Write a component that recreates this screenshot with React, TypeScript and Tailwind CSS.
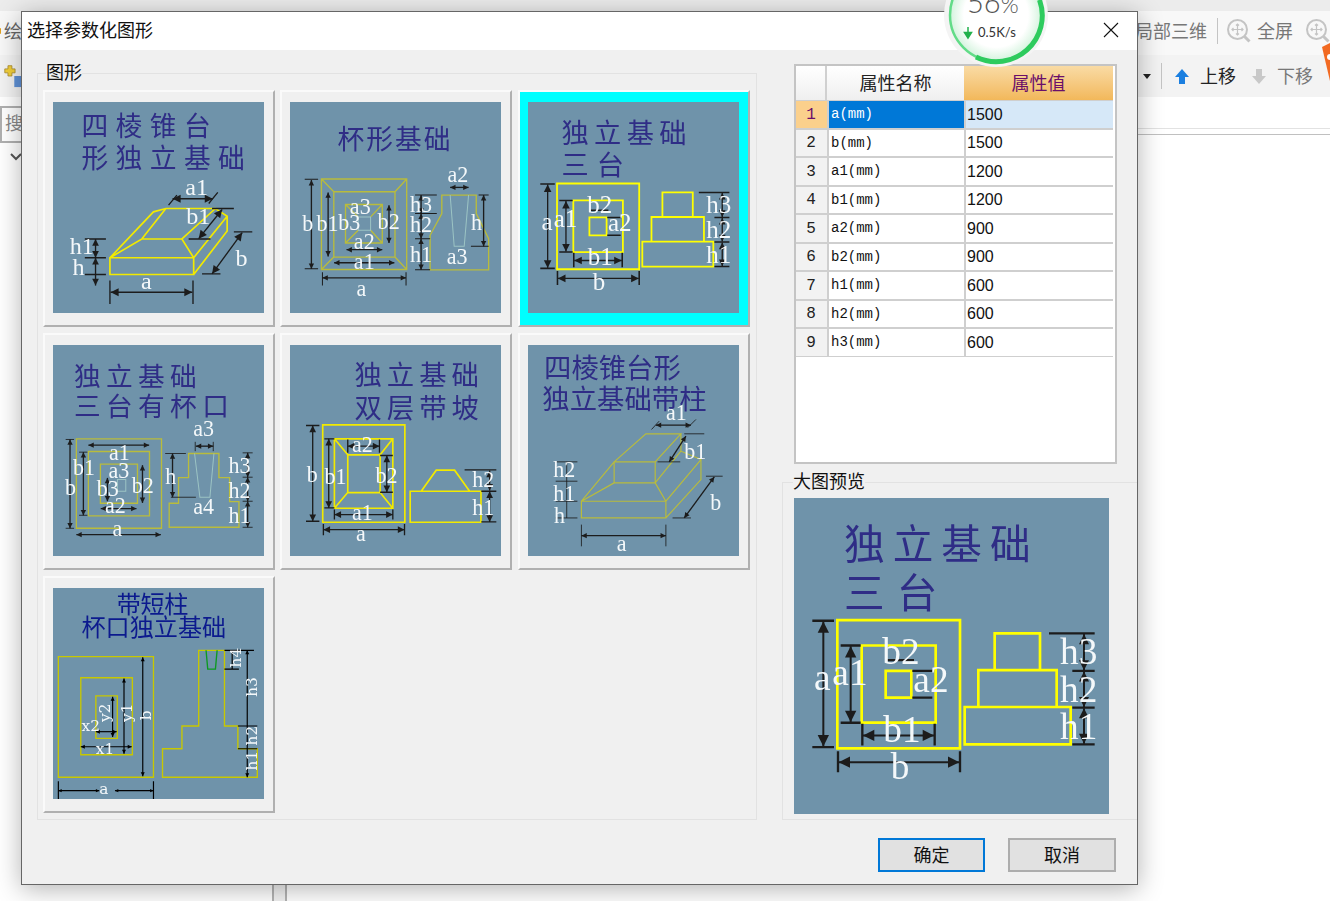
import type { ReactNode } from 'react';

const CJK = '"Noto Sans CJK SC", "Noto Sans", sans-serif';
const SERIF = '"Liberation Serif", serif';
const SLAB = '"DejaVu Serif", serif';
const BLACK = '#1c1c1c';
const YELLOW = '#f2ea00';
const OLIVE = '#b9bc3c';
const PALE = '#9cc4c4';

type DimProps = { x1: number; y1: number; x2: number; y2: number; s?: number; w?: number; c?: string };

// ligne de cote avec une flèche à chaque bout
const Dim = ({ x1, y1, x2, y2, s = 16, w = 4, c = BLACK }: DimProps) => {
  const a = Math.atan2(y2 - y1, x2 - x1);
  const head = (x: number, y: number, d: number) => {
    const bx = x + Math.cos(a) * s * d;
    const by = y + Math.sin(a) * s * d;
    const nx = -Math.sin(a) * s * 0.5;
    const ny = Math.cos(a) * s * 0.5;
    return `${x},${y} ${bx + nx},${by + ny} ${bx - nx},${by - ny}`;
  };
  return (
    <g>
      <line x1={x1} y1={y1} x2={x2} y2={y2} stroke={c} strokeWidth={w} />
      <polygon points={head(x1, y1, 1)} fill={c} />
      <polygon points={head(x2, y2, -1)} fill={c} />
    </g>
  );
};

const Lines = ({ d, c = YELLOW, w = 5 }: { d: string; c?: string; w?: number }) => (
  <path d={d} fill="none" stroke={c} strokeWidth={w} />
);

const Label = ({ x, y, t, size = 66, rot, font = SERIF }: { x: number; y: number; t: string; size?: number; rot?: boolean; font?: string }) => (
  <text
    x={x}
    y={y}
    fontSize={size}
    fontFamily={font}
    fill="#f4f8fa"
    transform={rot ? `rotate(-90 ${x} ${y})` : undefined}
  >
    {t}
  </text>
);

const Title = ({ x, y, t, size = 80, gap = 18, c = '#2f2d86' }: { x: number; y: number; t: string; size?: number; gap?: number; c?: string }) => (
  <text x={x} y={y} fontSize={size} letterSpacing={gap} fontFamily={CJK} fill={c}>
    {t}
  </text>
);

const Picture = ({ view, children, className }: { view: string; children: ReactNode; className: string }) => (
  <svg viewBox={view} preserveAspectRatio="none" className={`block bg-[#6f93aa] ${className}`}>
    {children}
  </svg>
);

type DiagramProps = { className: string };

const Pyramid = ({ className }: DiagramProps) => (
  <Picture view="160 307 630 630" className={className}>
    <Title x={245} y={410} t="四棱锥台" gap={22} />
    <Title x={245} y={503} t="形独立基础" gap={22} />
    <Lines d="M330 772H580V822H330ZM330 772L460 635L497 625H645L680 648V692L580 822M680 648L580 772M330 772L425 716H545L580 772M425 716L497 625M545 716L645 625" />
    <Lines c={BLACK} w={4} d="M330 840V910M578 840V910M505 615L530 585M625 610L652 577M635 625H700M565 716H630M700 695H755M605 820H660M255 716H318M255 772H318M255 822H318" />
    <Dim x1={332} y1={875} x2={576} y2={875} s={24} />
    <Dim x1={517} y1={596} x2={637} y2={596} s={24} />
    <Dim x1={665} y1={628} x2={595} y2={715} s={24} />
    <Dim x1={725} y1={697} x2={635} y2={820} s={24} />
    <Dim x1={287} y1={716} x2={287} y2={772} s={20} />
    <Dim x1={287} y1={772} x2={287} y2={855} s={20} />
    <Label x={555} y={585} t="a1" size={72} />
    <Label x={558} y={672} t="b1" size={72} />
    <Label x={210} y={760} t="h1" size={72} />
    <Label x={218} y={825} t="h" size={72} />
    <Label x={423} y={865} t="a" size={72} />
    <Label x={705} y={798} t="b" size={72} />
  </Picture>
);

const Cup = ({ className }: DiagramProps) => (
  <Picture view="871 307 631 630" className={className}>
    <Title x={1013} y={448} t="杯形基础" size={80} gap={6} />
    <Lines c={OLIVE} w={4} d="M965 537H1220V807H965ZM1002 575H1185V770H1002ZM965 537L1002 575M1220 537L1185 575M965 807L1002 770M1220 807L1185 770M1037 613H1147V728H1037ZM1037 613L1075 650M1147 613L1112 650M1037 728L1075 690M1147 728L1112 690M1325 585H1428V640L1465 715V808H1290V705L1325 640Z" />
    <Lines c={PALE} w={3} d="M1075 650H1112V690H1075ZM1350 585L1362 738H1392L1405 585" />
    <Lines c={BLACK} w={3} d="M915 538H955M915 805H955M968 815V855M1218 815V855M1245 585H1310M1245 640H1310M1245 715H1290M1245 808H1290M1435 585H1465M1412 738H1465" />
    <Dim x1={935} y1={540} x2={935} y2={805} />
    <Dim x1={985} y1={577} x2={985} y2={768} />
    <Dim x1={1167} y1={615} x2={1167} y2={728} />
    <Dim x1={968} y1={832} x2={1218} y2={832} />
    <Dim x1={1003} y1={787} x2={1183} y2={787} />
    <Dim x1={1040} y1={748} x2={1147} y2={748} />
    <Dim x1={1350} y1={562} x2={1405} y2={562} />
    <Dim x1={1263} y1={585} x2={1263} y2={640} />
    <Dim x1={1263} y1={640} x2={1263} y2={715} />
    <Dim x1={1263} y1={715} x2={1263} y2={808} />
    <Dim x1={1450} y1={585} x2={1450} y2={738} />
    <Label x={908} y={693} t="b" />
    <Label x={950} y={693} t="b1" />
    <Label x={1015} y={688} t="b3" />
    <Label x={1050} y={640} t="a3" />
    <Label x={1133} y={685} t="b2" />
    <Label x={1062} y={745} t="a2" />
    <Label x={1062} y={805} t="a1" />
    <Label x={1070} y={885} t="a" />
    <Label x={1230} y={635} t="h3" />
    <Label x={1230} y={695} t="h2" />
    <Label x={1230} y={785} t="h1" />
    <Label x={1340} y={790} t="a3" />
    <Label x={1342} y={545} t="a2" />
    <Label x={1412} y={690} t="h" />
  </Picture>
);

const ThreeStep = ({ className }: DiagramProps) => (
  <Picture view="70 115 945 945" className={className}>
    <Title x={220} y={298} t="独立基础" size={122} gap={24} />
    <Title x={220} y={443} t="三台" size={122} gap={36} />
    <Lines w={8} c="#ffff00" d="M200 480H568V864H200ZM273 556H495V787H273ZM345 632H422V712H345ZM672 520H808V630H672ZM623 630H858V740H623ZM582 740H900V852H582Z" />
    <Lines c={BLACK} w={7} d="M125 482H190M125 860H190M210 556H270M210 787H270M275 790V855M492 790V855M202 872V935M568 872V935M835 520H972M905 632H972M905 742H972M905 852H972M345 600H430M425 632H485M425 712H485" />
    <Dim x1={158} y1={484} x2={158} y2={858} s={34} w={6} />
    <Dim x1={240} y1={558} x2={240} y2={785} s={34} w={6} />
    <Dim x1={277} y1={825} x2={490} y2={825} s={34} w={6} />
    <Dim x1={204} y1={905} x2={566} y2={905} s={34} w={6} />
    <Dim x1={940} y1={522} x2={940} y2={630} s={30} w={6} />
    <Dim x1={940} y1={634} x2={940} y2={740} s={30} w={6} />
    <Dim x1={940} y1={744} x2={940} y2={850} s={30} w={6} />
    <Label x={130} y={688} t="a" size={112} />
    <Label x={185} y={675} t="a1" size={112} />
    <Label x={335} y={610} t="b2" size={112} />
    <Label x={428} y={695} t="a2" size={112} />
    <Label x={338} y={845} t="b1" size={112} />
    <Label x={360} y={955} t="b" size={112} />
    <Label x={868} y={612} t="h3" size={112} />
    <Label x={868} y={725} t="h2" size={112} />
    <Label x={868} y={835} t="h1" size={112} />
  </Picture>
);

const ThreeStepCup = ({ className }: DiagramProps) => (
  <Picture view="2 2 632 632" className={className}>
    <Title x={65} y={125} t="独立基础" gap={16} />
    <Title x={65} y={216} t="三台有杯口" gap={16} />
    <Lines c={OLIVE} w={4} d="M72 283H327V551H72ZM108 321H291V514H108ZM144 359H255V476H144ZM408 327H499V399H531V471H559V548H350V476H378V399H408Z" />
    <Lines c={PALE} w={3} d="M195 405H220V440H195ZM426 327L442 458H472L484 327" />
    <Lines c={BLACK} w={2.5} d="M40 285H65M40 551H65M80 323H105M80 512H105M338 327H400M355 458H430M570 325H600M570 398H600M570 470H600M570 548H600M428 292V320M482 292V320" />
    <Dim x1={53} y1={285} x2={53} y2={551} />
    <Dim x1={93} y1={323} x2={93} y2={512} />
    <Dim x1={108} y1={302} x2={290} y2={302} />
    <Dim x1={430} y1={305} x2={482} y2={305} />
    <Dim x1={165} y1={400} x2={165} y2={470} />
    <Dim x1={270} y1={362} x2={270} y2={475} />
    <Dim x1={145} y1={492} x2={252} y2={492} />
    <Dim x1={72} y1={570} x2={325} y2={570} />
    <Dim x1={360} y1={327} x2={360} y2={458} />
    <Dim x1={585} y1={325} x2={585} y2={398} />
    <Dim x1={585} y1={398} x2={585} y2={470} />
    <Dim x1={585} y1={470} x2={585} y2={548} />
    <Label x={38} y={450} t="b" />
    <Label x={62} y={390} t="b1" />
    <Label x={170} y={345} t="a1" />
    <Label x={168} y={400} t="a3" />
    <Label x={133} y={455} t="b3" />
    <Label x={238} y={445} t="b2" />
    <Label x={158} y={505} t="a2" />
    <Label x={180} y={575} t="a" />
    <Label x={422} y={275} t="a3" />
    <Label x={338} y={418} t="h" />
    <Label x={422} y={508} t="a4" />
    <Label x={528} y={385} t="h3" />
    <Label x={528} y={460} t="h2" />
    <Label x={528} y={535} t="h1" />
  </Picture>
);

const TwoStepSlope = ({ className }: DiagramProps) => (
  <Picture view="2 2 632 632" className={className}>
    <Title x={195} y={122} t="独立基础" size={82} gap={15} />
    <Title x={195} y={220} t="双层带坡" size={82} gap={15} />
    <Lines d="M100 241H346V533H100ZM135 283H310V491H135ZM175 331H272V444H175ZM135 283L175 331M310 283L272 331M135 491L175 444M310 491L272 444M362 440H574V533H362ZM395 440L440 377H495L540 440" />
    <Lines c={BLACK} w={4} d="M50 243H90M50 530H90M105 283H135M105 490H135M175 285V325M270 285V325M272 333H310M272 443H310M135 495V525M310 495V525M102 538V572M345 538V572M525 376H620M575 440H620M575 532H620" />
    <Dim x1={70} y1={243} x2={70} y2={530} s={20} />
    <Dim x1={118} y1={283} x2={118} y2={490} s={20} />
    <Dim x1={175} y1={305} x2={270} y2={305} s={20} />
    <Dim x1={292} y1={333} x2={292} y2={443} s={20} />
    <Dim x1={135} y1={510} x2={310} y2={510} s={20} />
    <Dim x1={102} y1={555} x2={345} y2={555} s={20} />
    <Dim x1={600} y1={378} x2={600} y2={438} s={20} />
    <Dim x1={600} y1={440} x2={600} y2={532} s={20} />
    <Label x={52} y={412} t="b" />
    <Label x={105} y={418} t="b1" />
    <Label x={188} y={322} t="a2" />
    <Label x={258} y={415} t="b2" />
    <Label x={188} y={525} t="a1" />
    <Label x={200} y={588} t="a" />
    <Label x={548} y={428} t="h2" />
    <Label x={548} y={510} t="h1" />
  </Picture>
);

const PyramidColumn = ({ className }: DiagramProps) => (
  <Picture view="2 2 632 632" className={className}>
    <Title x={50} y={100} t="四棱锥台形" size={82} gap={0} />
    <Title x={45} y={195} t="独立基础带柱" size={82} gap={0} />
    <Lines c={OLIVE} w={3.5} d="M162 470H415V520H162ZM162 470L260 415M162 470L260 352M260 352H383V415H260ZM260 352L355 268H460L383 352M460 268V320L520 345V405L415 520M383 415L415 470L520 345M383 415L460 320" />
    <Lines c={BLACK} w={2.5} d="M470 268H530M390 352H458M535 395H585M435 520H490M162 540V605M415 540V605M85 352H150M85 410H150M85 470H150M85 520H150M118 352V520M372 255L395 230M480 250L505 225" />
    <Dim x1={385} y1={242} x2={490} y2={242} />
    <Dim x1={475} y1={275} x2={425} y2={352} />
    <Dim x1={560} y1={397} x2={470} y2={520} />
    <Dim x1={162} y1={573} x2={415} y2={573} />
    <Label x={415} y={228} t="a1" />
    <Label x={470} y={342} t="b1" />
    <Label x={78} y={398} t="h2" />
    <Label x={78} y={470} t="h1" />
    <Label x={80} y={535} t="h" />
    <Label x={268} y={620} t="a" />
    <Label x={548} y={495} t="b" />
  </Picture>
);

const ShortColumn = ({ className }: DiagramProps) => (
  <Picture view="160 55 630 630" className={className}>
    <Title x={350} y={129} t="带短柱" size={72} gap={-1} c="#0c1a8e" />
    <Title x={245} y={199} t="杯口独立基础" size={72} gap={0} c="#0c1a8e" />
    <Lines c="#c8c800" w={4} d="M176 260H460V620H176ZM243 323H397V553H243ZM288 377H352V504H288ZM595 241H672V467H712V535H770V620H487V535H545V467H595Z" />
    <Lines c="#0c9a20" w={4} d="M617 241L622 297H645L650 241" />
    <Lines c="#000" w={3.5} d="M176 632V685M460 632V685M672 241H760M672 297H715M712 467H770M712 535H770M695 241V297" />
    <Dim x1={176} y1={660} x2={298} y2={660} s={10} w={3.5} c="#000" />
    <Dim x1={345} y1={660} x2={460} y2={660} s={10} w={3.5} c="#000" />
    <Dim x1={428} y1={262} x2={428} y2={617} s={12} w={3.5} c="#000" />
    <Dim x1={372} y1={325} x2={372} y2={550} s={12} w={3.5} c="#000" />
    <Dim x1={338} y1={380} x2={338} y2={500} s={12} w={3.5} c="#000" />
    <Dim x1={288} y1={484} x2={350} y2={484} s={12} w={3.5} c="#000" />
    <Dim x1={243} y1={529} x2={395} y2={529} s={12} w={3.5} c="#000" />
    <Dim x1={740} y1={241} x2={740} y2={620} s={12} w={3.5} c="#000" />
    <Label x={245} y={482} t="x2" size={46} font={SLAB} />
    <Label x={288} y={550} t="x1" size={46} font={SLAB} />
    <Label x={298} y={670} t="a" size={46} font={SLAB} />
    <Label x={330} y={455} t="y2" size={46} rot font={SLAB} />
    <Label x={395} y={455} t="y1" size={46} rot font={SLAB} />
    <Label x={452} y={450} t="b" size={46} rot font={SLAB} />
    <Label x={722} y={292} t="h4" size={46} rot font={SLAB} />
    <Label x={768} y={380} t="h3" size={46} rot font={SLAB} />
    <Label x={768} y={525} t="h2" size={46} rot font={SLAB} />
    <Label x={768} y={600} t="h1" size={46} rot font={SLAB} />
  </Picture>
);

const shapes = [
  { id: 1, Diagram: Pyramid },
  { id: 2, Diagram: Cup },
  { id: 3, Diagram: ThreeStep },
  { id: 4, Diagram: ThreeStepCup },
  { id: 5, Diagram: TwoStepSlope },
  { id: 6, Diagram: PyramidColumn },
  { id: 7, Diagram: ShortColumn },
];

const params = [
  { name: 'a(mm)', value: '1500' },
  { name: 'b(mm)', value: '1500' },
  { name: 'a1(mm)', value: '1200' },
  { name: 'b1(mm)', value: '1200' },
  { name: 'a2(mm)', value: '900' },
  { name: 'b2(mm)', value: '900' },
  { name: 'h1(mm)', value: '600' },
  { name: 'h2(mm)', value: '600' },
  { name: 'h3(mm)', value: '600' },
];

const NetworkBadge = () => (
  <svg viewBox="941 0 110 70" className="absolute left-[941px] top-0 z-20 h-[70px] w-[110px]">
    <defs>
      <radialGradient id="speedFill" cx="50%" cy="50%" r="50%">
        <stop offset="70%" stopColor="#ffffff" />
        <stop offset="100%" stopColor="#d3f3dd" />
      </radialGradient>
    </defs>
    <circle cx={996} cy={15} r={52} fill="#f4f4f4" />
    <circle cx={996} cy={15} r={46} fill="url(#speedFill)" stroke="#62dc88" strokeWidth={2.5} />
    <path d="M976 57A46 46 0 0 0 1039.500 0" fill="none" stroke="#2ecb5e" strokeWidth={5} />
    <text x={967} y={13} fontSize={29} fontWeight={300} fontFamily="Lato, sans-serif" fill="#555">
      56<tspan fontSize={23}>%</tspan>
    </text>
    <path d="M968 27V34M964.500 32.500L968 38L971.500 32.500Z" stroke="#22b14c" strokeWidth={1.5} fill="#22b14c" />
    <text x={978} y={37} fontSize={13} fontFamily="Lato, sans-serif" fill="#333">
      0.5K/s
    </text>
  </svg>
);

const ZoomIcon = ({ className }: { className: string }) => (
  <svg viewBox="0 0 24 24" className={className} fill="none" stroke="#c4c4c4">
    <circle cx="10.500" cy="10.500" r="9.500" strokeWidth="2" />
    <path d="M17.500 17.500L22.500 22.500" strokeWidth="3" />
    <path d="M10.500 5V16M5 10.500H16M9 6.500L10.500 5L12 6.500M9 14.500L10.500 16L12 14.500M6.500 9L5 10.500L6.500 12M14.500 9L16 10.500L14.500 12" strokeWidth="1.200" />
  </svg>
);

const MoveArrow = ({ up }: { up: boolean }) => (
  <svg viewBox="0 0 14 15" className="h-[15px] w-[14px]">
    <path
      d={up ? 'M7 0L14 8H10V15H4V8H0Z' : 'M7 15L14 7H10V0H4V7H0Z'}
      fill={up ? '#1b7fe0' : '#c8c8c8'}
    />
  </svg>
);

const Background = () => (
  <div className="flex h-full flex-col overflow-hidden bg-white text-[18px]" style={{ fontFamily: CJK }}>
    <div className="h-[11px] shrink-0 bg-[#ececec]" />
    <div className="flex h-[44px] shrink-0 items-center bg-[#f8f8f8] pb-[5px]">
      <span className="h-[6px] w-[4px] rounded-r-full bg-[#e0a020]" />
      <span className="ml-[3px] text-[#666]">绘</span>
      <div className="ml-[1113px] flex shrink-0 items-center whitespace-nowrap text-[#777]">
        <span>局部三维</span>
        <span className="ml-[10px] h-[26px] w-px bg-[#c4c4c4]" />
        <ZoomIcon className="ml-[9px] h-[24px] w-[24px]" />
        <span className="ml-[6px]">全屏</span>
        <ZoomIcon className="ml-[13px] h-[24px] w-[24px]" />
      </div>
    </div>
    <div className="flex h-[42px] shrink-0 items-center bg-[#f3f3f3]">
      <svg viewBox="0 0 24 28" className="ml-[4px] h-[24px] w-[19px]">
        <path d="M5 1H10V5H14V10H10V14H5V10H1V5H5Z" fill="#f2cf3a" stroke="#a8892a" />
        <rect x="13" y="14" width="11" height="14" fill="#5f92d8" />
      </svg>
      <span className="ml-[1120px] h-0 w-0 border-x-[4px] border-t-[5px] border-x-transparent border-t-[#222]" />
      <span className="ml-[10px] h-[26px] w-px bg-[#c4c4c4]" />
      <span className="ml-[13px]">
        <MoveArrow up />
      </span>
      <span className="ml-[11px] shrink-0 pb-[2px] text-[#222]">上移</span>
      <span className="ml-[16px]">
        <MoveArrow up={false} />
      </span>
      <span className="ml-[11px] shrink-0 pb-[2px] text-[#777]">下移</span>
    </div>
    <div className="flex min-h-0 flex-1">
      <div className="w-[272px] shrink-0 pt-[9px]">
        <div className="h-[37px] border-2 border-[#b0b0b0] pl-[3px] leading-[28px] text-[#888]">搜</div>
        <svg viewBox="0 0 12 8" className="ml-[10px] mt-[10px] h-[8px] w-[12px]" fill="none" stroke="#555" strokeWidth="2">
          <path d="M1 1L6 6L11 1" />
        </svg>
      </div>
      <div className="w-[15px] shrink-0 border-x-2 border-[#b4b4b4] bg-[#f2f2f2]" />
      <div className="flex-1 pt-[31px]">
        <div className="h-[7px] border-y border-t-[#e2e2e2] border-b-[#c0c0c0]" />
      </div>
    </div>
  </div>
);

export default function App() {
  return (
    <div className="relative h-[901px] w-[1330px] overflow-hidden" style={{ fontFamily: CJK }}>
      <Background />
      <svg viewBox="0 0 10 38" className="absolute left-[1320px] top-[43px] h-[38px] w-[10px]">
        <path d="M2 4L10 0V38Z" fill="#f26a22" />
        <circle cx="10" cy="14" r="3" fill="#fff" />
      </svg>

      <div className="absolute left-[21px] top-[11px] flex h-[874px] w-[1117px] flex-col border border-[#666] bg-[#f0f0f0] shadow-[0_4px_24px_rgba(0,0,0,0.3)]">
        <div className="flex h-[38px] shrink-0 items-center justify-between bg-white pb-[3px] pl-[5px] pr-[18px] text-[18px] text-[#111]">
          <span>选择参数化图形</span>
          <svg viewBox="0 0 16 16" className="h-[16px] w-[16px]" stroke="#111" strokeWidth="1.100">
            <path d="M1 1L15 15M15 1L1 15" />
          </svg>
        </div>

        <div className="flex pl-[15px] pt-[13px]">
          <fieldset className="h-[757px] w-[720px] border border-[#e2e2e2] pl-[5px]">
            <legend className="ml-[3px] pb-[4px] text-[18px] leading-[16px] text-[#111]">图形</legend>
            <div className="grid grid-cols-[232px_232px_232px] auto-rows-[237px] gap-x-[5px] gap-y-[6px] pt-[7px]">
              {shapes.map(({ id, Diagram }) => (
                <div
                  key={id}
                  className={`w-[232px] border-2 border-t-[#fafafa] border-l-[#fafafa] border-r-[#b0b0b0] border-b-[#b0b0b0] pl-[8px] pt-[10px] ${
                    id === 3 ? 'bg-[#00ffff]' : 'bg-[#f0f0f0]'
                  } ${id === 3 || id === 6 ? 'ml-[1px]' : ''}`}
                >
                  <Diagram className="h-[211px] w-[211px] blur-[0.5px]" />
                </div>
              ))}
            </div>
          </fieldset>

          <div className="ml-[25px] flex w-[355px] flex-col">
            <div className="ml-[12px] mt-[1px] h-[400px] w-[323px] border-2 border-[#c4c4c4] bg-white">
              <div className="grid grid-cols-[31px_137px_149px] text-[#222]">
                <div className="h-[34px] border-r-2 border-[#d0d0d0] bg-gradient-to-b from-white to-[#efefef]" />
                <div className="flex h-[34px] items-center justify-center bg-gradient-to-b from-white to-[#efefef] pb-[2px] text-[18px]">
                  属性名称
                </div>
                <div className="flex h-[34px] items-center justify-center bg-gradient-to-b from-[#f9dba4] to-[#f2b85a] pb-[2px] text-[18px] text-[#6a0f6a]">
                  属性值
                </div>
                {params.map((row, i) => (
                  <div key={row.name} className="contents">
                    <div
                      className={`flex h-[28.5px] items-center justify-center border-y border-[#cfcfcf] pr-[1px] pt-[1px] text-[16px] ${
                        i === 0 ? 'bg-[#fbd08c] text-[#6a0f6a]' : 'bg-[#f2f2f2]'
                      }`}
                      style={{ fontFamily: '"Liberation Mono", monospace' }}
                    >
                      {i + 1}
                    </div>
                    <div
                      className={`flex h-[28.5px] items-center border-y border-l-2 border-[#cfcfcf] pl-[2px] pt-[1px] text-[14px] ${
                        i === 0 ? 'bg-[#0078d7] text-white' : 'bg-white text-[#111]'
                      }`}
                      style={{ fontFamily: '"Liberation Mono", monospace' }}
                    >
                      {row.name}
                    </div>
                    <div
                      className={`flex h-[28.5px] items-center border-y border-l-2 border-[#cfcfcf] pl-[1px] pt-[1px] text-[16px] text-[#111] ${
                        i === 0 ? 'bg-[#d6e8f8]' : 'bg-white'
                      }`}
                      style={{ fontFamily: '"Liberation Sans", sans-serif' }}
                    >
                      {row.value}
                    </div>
                  </div>
                ))}
              </div>
            </div>

            <fieldset className="mt-[8px] h-[348px] border border-r-0 border-[#e2e2e2] pl-[11px]">
              <legend className="-ml-px pb-[4px] text-[18px] leading-[16px] text-[#111]">大图预览</legend>
              <div className="pt-[6px]">
                <ThreeStep className="h-[316px] w-[315px] blur-[0.4px]" />
              </div>
            </fieldset>
          </div>
        </div>

        <div className="mt-[18px] flex justify-end gap-[23px] pr-[21px] text-[18px] text-[#111]">
          <button className="h-[34px] w-[107px] border-2 border-[#0078d7] bg-[#e1e1e1] pb-[2px]">确定</button>
          <button className="h-[34px] w-[108px] border-2 border-[#adadad] bg-[#e1e1e1] pb-[2px]">取消</button>
        </div>
      </div>

      <NetworkBadge />
    </div>
  );
}
